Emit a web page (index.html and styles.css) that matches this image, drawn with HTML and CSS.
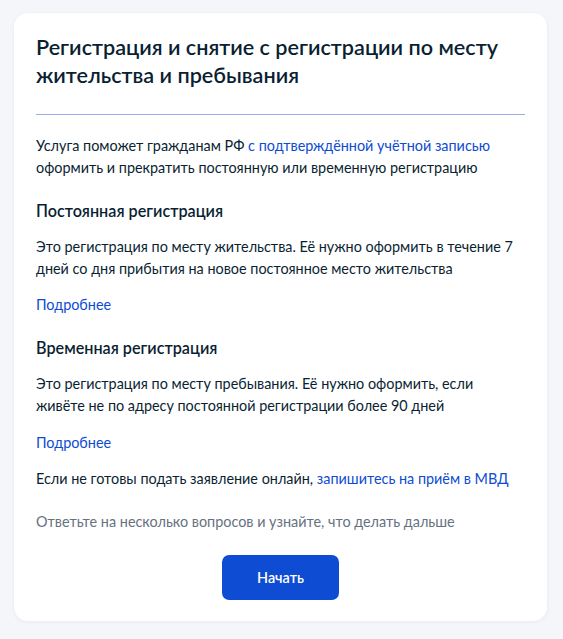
FILE: index.html
```html
<!DOCTYPE html>
<html lang="ru">
<head>
<meta charset="utf-8">
<link rel="stylesheet" href="styles.css">
</head>
<body>
<main class="card">
  <h1 class="title">Регистрация и снятие с регистрации по месту жительства и пребывания</h1>
  <hr class="divider">
  <div class="content">
    <p class="text">Услуга поможет гражданам РФ <a class="link" href="#">с подтверждённой учётной записью</a> оформить и прекратить постоянную или временную регистрацию</p>
    <h2 class="subtitle">Постоянная регистрация</h2>
    <p class="text">Это регистрация по месту жительства. Её нужно оформить в течение 7 дней со дня прибытия на новое постоянное место жительства</p>
    <p class="text"><a class="link" href="#">Подробнее</a></p>
    <h2 class="subtitle">Временная регистрация</h2>
    <p class="text">Это регистрация по месту пребывания. Её нужно оформить, если живёте не по адресу постоянной регистрации более 90 дней</p>
    <p class="text text-gap"><a class="link" href="#">Подробнее</a></p>
    <p class="text">Если не готовы подать заявление онлайн, <a class="link" href="#">запишитесь на приём в МВД</a></p>
    <p class="text muted">Ответьте на несколько вопросов и узнайте, что делать дальше</p>
    <div class="actions"><button class="btn" type="button">Начать</button></div>
  </div>
</main>
</body>
</html>
```
FILE: styles.css
```css
html, body {
  margin: 0;
  padding: 0;
  background: #f4f6fa;
}
body {
  font-family: Lato, "Noto Sans", sans-serif;
  color: #0b1f33;
  padding: 13px 16px 19px 14px;
}
.card {
  background: #fff;
  border-radius: 14px;
  box-shadow: 0 1px 4px rgba(11, 31, 51, 0.06);
  padding: 20px 22px 21px 22px;
}
.title {
  margin: 0;
  font-size: 21.6px;
  line-height: 28px;
  font-weight: 600;
}
.divider {
  border: 0;
  border-top: 1px solid #97b0ec;
  margin: 25px 0 20px;
}
.content {
  display: flex;
  flex-direction: column;
  gap: 14.4px;
}
.text {
  margin: 0 3px 0 0;
  font-size: 14.4px;
  line-height: 21.6px;
}
.text-gap {
  margin-top: 1px;
}
.subtitle {
  margin: 7.5px 0 0;
  font-size: 16.2px;
  line-height: 21.6px;
  font-weight: 600;
}
.link {
  color: #0d4cd3;
  text-decoration: none;
}
.muted {
  margin-top: 7.2px;
  color: #66727f;
}
.actions {
  display: flex;
  justify-content: center;
  margin-top: 8.4px;
}
.btn {
  width: 117px;
  height: 45px;
  border: 0;
  border-radius: 7.2px;
  background: #0d4cd3;
  color: #fff;
  font-family: Lato, "Noto Sans", sans-serif;
  font-size: 14.4px;
  font-weight: 600;
}
```
